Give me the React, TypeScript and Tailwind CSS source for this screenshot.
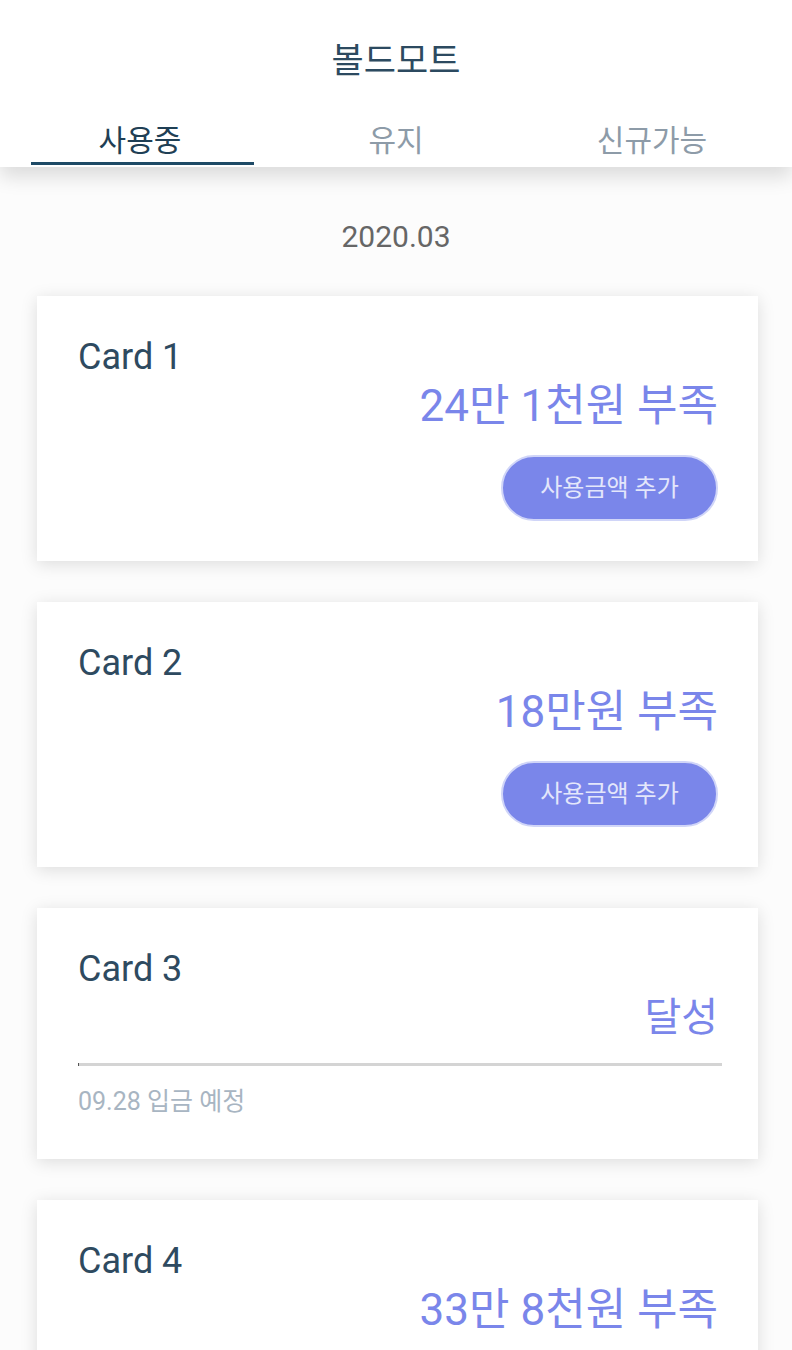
import React from "react";

const FONT = { fontFamily: 'Roboto, "Noto Sans CJK KR", "Noto Sans", sans-serif' };

type CardData = {
  name: string;
  amount: string;
  button?: boolean;
  progress?: string;
};

const cards: CardData[] = [
  { name: "Card 1", amount: "24만 1천원 부족", button: true },
  { name: "Card 2", amount: "18만원 부족", button: true },
  { name: "Card 3", amount: "달성", progress: "09.28 입금 예정" },
  { name: "Card 4", amount: "33만 8천원 부족", button: true },
];

function Card({ c }: { c: CardData }) {
  return (
    <div
      className={
        "ml-[37px] w-[721px] bg-white shadow-[0_3px_16px_rgba(0,0,0,0.13)] pl-[41px] pr-[40px] pt-[41px] flex flex-col " +
        (c.progress ? "pb-[42px]" : "pb-[40px]")
      }
    >
      <div className="text-[36px] leading-[40px] text-[#2e4a60]">{c.name}</div>
      <div
        className={
          "mt-[5px] leading-[48px] text-[#7a86ea] text-right " +
          (c.progress ? "text-[40px]" : "text-[44px]")
        }
      >
        {c.amount}
      </div>
      {c.button && (
        <div className="flex justify-end mt-[25px]">
          <button className="w-[217px] h-[66px] rounded-full bg-[#7a86ea] border-2 border-[#d0d5f8] text-[24px] text-[#e4e7fb] flex items-center justify-center">
            사용금액 추가
          </button>
        </div>
      )}
      {c.progress && (
        <>
          <div className="mt-[21px] w-[644px] h-[3px] bg-[#d4d4d4] flex">
            <div className="w-[1px] h-full bg-[#555]" />
          </div>
          <div className="mt-[21px] text-[25px] leading-[30px] text-[#a8b5c2]">{c.progress}</div>
        </>
      )}
    </div>
  );
}

export default function App() {
  const tabs = ["사용중", "유지", "신규가능"];
  return (
    <div style={FONT} className="w-[792px] min-h-[1350px] bg-[#fcfcfc]">
      <div className="relative z-10 bg-white shadow-[0_10px_18px_rgba(0,0,0,0.13)] pt-[42px]">
        <div className="text-center text-[35px] leading-[40px] text-[#2c4a60]">볼드모트</div>
        <div className="mt-[41px] px-[12px] flex">
          {tabs.map((t, i) => (
            <div key={t} className="w-[256px] flex flex-col items-center">
              <div
                className={
                  "text-[30px] leading-[36px] " +
                  (i === 0 ? "text-[#1f3f55]" : "text-[#8d9ba8]")
                }
              >
                {t}
              </div>
              <div
                className={
                  "mt-[3px] mb-[2px] h-[3px] w-[223px] ml-[4px] " +
                  (i === 0 ? "bg-[#1e4a66]" : "bg-transparent")
                }
              />
            </div>
          ))}
        </div>
      </div>
      <div className="mt-[50px] text-center text-[30px] leading-[40px] text-[#666666]">2020.03</div>
      <div className="mt-[39px] flex flex-col gap-[41px] pb-[40px]">
        {cards.map((c) => (
          <Card key={c.name} c={c} />
        ))}
      </div>
    </div>
  );
}
